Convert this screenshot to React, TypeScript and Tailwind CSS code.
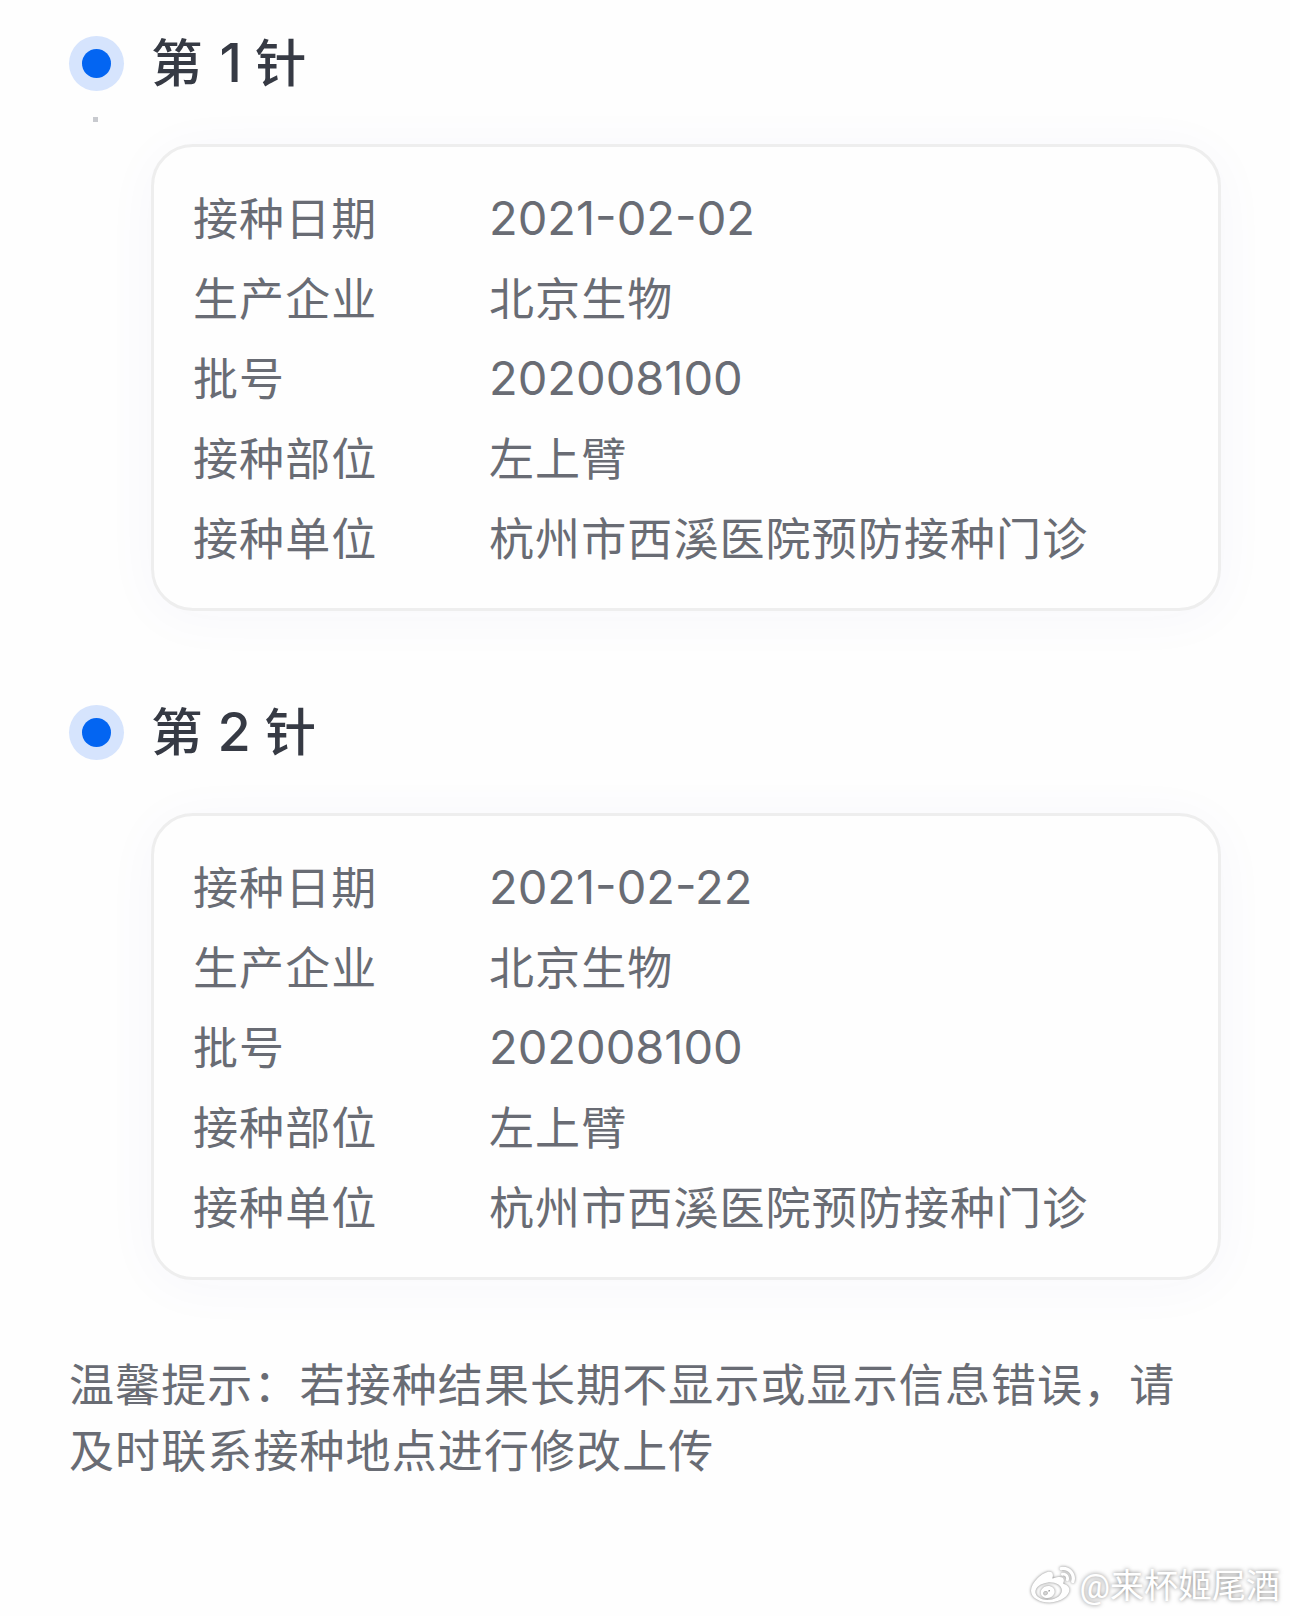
import { FaWeibo } from "react-icons/fa";

const doses = [
  {
    no: 1,
    rows: [
      ["接种日期", "2021-02-02"],
      ["生产企业", "北京生物"],
      ["批号", "202008100"],
      ["接种部位", "左上臂"],
      ["接种单位", "杭州市西溪医院预防接种门诊"],
    ],
  },
  {
    no: 2,
    rows: [
      ["接种日期", "2021-02-22"],
      ["生产企业", "北京生物"],
      ["批号", "202008100"],
      ["接种部位", "左上臂"],
      ["接种单位", "杭州市西溪医院预防接种门诊"],
    ],
  },
];

function Dose({ no, rows }: any) {
  return (
    <section className="h-[669px]">
      <div className="flex h-[55px] items-center">
        <div className="flex size-[55px] items-center justify-center rounded-full bg-[#d6e4fd]">
          <div className="size-[29px] rounded-full bg-[#0365f2]" />
        </div>
        <h2 className="ml-[27px] flex h-[55px] items-baseline text-[51.5px] leading-[55px] font-medium text-[#363a44]">
          <span>第</span>
          <span className={`text-[54px] leading-none ${no === 1 ? "mr-[13px] ml-[17px]" : "mr-[14px] ml-[15px]"}`}>
            {no}
          </span>
          <span>针</span>
        </h2>
      </div>

      {/* end of the timeline line, only the first dose has one */}
      <div className="flex h-[53px] w-[55px] pt-[26px] pl-6">
        {no === 1 && <div className="size-[5px] bg-[#c8cacf]" />}
      </div>

      <div className="ml-[82px] h-[467px] w-[1070px] rounded-[42px] border-3 border-[#eeeeee] bg-[#fefefe] pt-[31px] pl-[39px] shadow-[0_6px_56px_rgba(60,60,160,0.035)]">
        {rows.map(([label, value]: string[]) => (
          <div
            key={label}
            className="flex h-20 items-center text-[45px] tracking-[1.1px] text-[#696c74]"
          >
            <span className="w-[296px] pt-[3px]">{label}</span>
            {/^\d/.test(value) ? (
              <span className="text-[47px] tracking-normal">{value}</span>
            ) : (
              <span className="pt-[3px]">{value}</span>
            )}
          </div>
        ))}
      </div>
    </section>
  );
}

export default function App() {
  return (
    <div
      lang="zh-CN"
      className="relative h-[1616px] w-[1290px] overflow-hidden bg-[#fefefe] pt-9 pl-[69px] font-['Inter','Noto_Sans_CJK_SC',sans-serif]"
    >
      {doses.map((d) => (
        <Dose key={d.no} {...d} />
      ))}

      <p className="-mt-[21px] text-[45px] leading-[66px] tracking-[1.1px] text-[#696c74]">
        温馨提示：若接种结果长期不显示或显示信息错误，请
        <br />
        及时联系接种地点进行修改上传
      </p>

      <div className="absolute right-[10px] bottom-[8px] flex items-center text-white">
        <FaWeibo className="mr-1 size-[44px] drop-shadow-[0_0_1.5px_rgba(0,0,0,0.5)]" />
        <span className="font-['Roboto','Noto_Sans_CJK_SC',sans-serif] text-[34px] leading-[44px] [text-shadow:0_0_4px_rgba(0,0,0,0.5)]">
          @来杯姬尾酒
        </span>
      </div>
    </div>
  );
}
